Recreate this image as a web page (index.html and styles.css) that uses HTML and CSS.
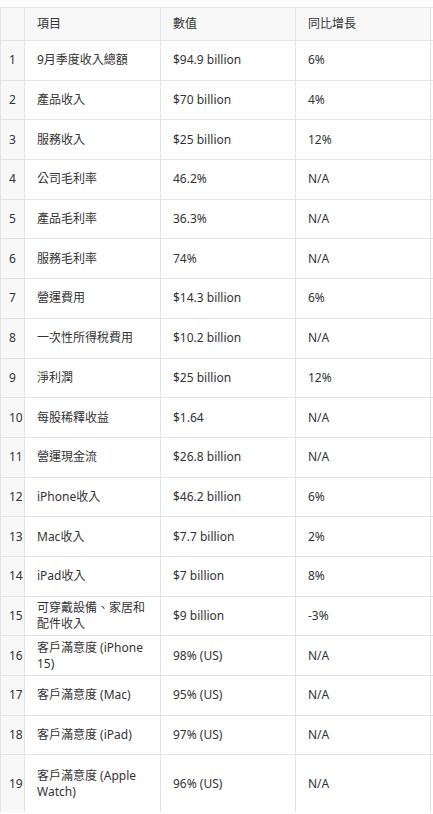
FILE: index.html
```html
<!DOCTYPE html>
<html lang="zh-Hant">
<head>
<meta charset="utf-8">
<title>表格</title>
<link rel="stylesheet" href="styles.css">
</head>
<body>
<div class="wrap">
<table class="data">
  <colgroup>
    <col class="c-idx"><col class="c-name"><col class="c-val"><col class="c-yoy"><col class="c-more">
  </colgroup>
  <thead>
    <tr><th class="idx"></th><th>項目</th><th>數值</th><th>同比增長</th><th class="more"></th></tr>
  </thead>
  <tbody>
    <tr><td class="idx">1</td><td>9月季度收入總額</td><td>$94.9 billion</td><td>6%</td><td class="more"></td></tr>
    <tr><td class="idx">2</td><td>產品收入</td><td>$70 billion</td><td>4%</td><td class="more"></td></tr>
    <tr><td class="idx">3</td><td>服務收入</td><td>$25 billion</td><td>12%</td><td class="more"></td></tr>
    <tr><td class="idx">4</td><td>公司毛利率</td><td>46.2%</td><td>N/A</td><td class="more"></td></tr>
    <tr><td class="idx">5</td><td>產品毛利率</td><td>36.3%</td><td>N/A</td><td class="more"></td></tr>
    <tr><td class="idx">6</td><td>服務毛利率</td><td>74%</td><td>N/A</td><td class="more"></td></tr>
    <tr><td class="idx">7</td><td>營運費用</td><td>$14.3 billion</td><td>6%</td><td class="more"></td></tr>
    <tr><td class="idx">8</td><td>一次性所得稅費用</td><td>$10.2 billion</td><td>N/A</td><td class="more"></td></tr>
    <tr><td class="idx">9</td><td>淨利潤</td><td>$25 billion</td><td>12%</td><td class="more"></td></tr>
    <tr><td class="idx">10</td><td>每股稀釋收益</td><td>$1.64</td><td>N/A</td><td class="more"></td></tr>
    <tr><td class="idx">11</td><td>營運現金流</td><td>$26.8 billion</td><td>N/A</td><td class="more"></td></tr>
    <tr><td class="idx">12</td><td>iPhone收入</td><td>$46.2 billion</td><td>6%</td><td class="more"></td></tr>
    <tr><td class="idx">13</td><td>Mac收入</td><td>$7.7 billion</td><td>2%</td><td class="more"></td></tr>
    <tr><td class="idx">14</td><td>iPad收入</td><td>$7 billion</td><td>8%</td><td class="more"></td></tr>
    <tr><td class="idx">15</td><td>可穿戴設備、家居和配件收入</td><td>$9 billion</td><td>-3%</td><td class="more"></td></tr>
    <tr><td class="idx">16</td><td>客戶滿意度 (iPhone 15)</td><td>98% (US)</td><td>N/A</td><td class="more"></td></tr>
    <tr><td class="idx">17</td><td>客戶滿意度 (Mac)</td><td>95% (US)</td><td>N/A</td><td class="more"></td></tr>
    <tr><td class="idx">18</td><td>客戶滿意度 (iPad)</td><td>97% (US)</td><td>N/A</td><td class="more"></td></tr>
    <tr class="last"><td class="idx">19</td><td>客戶滿意度 (Apple Watch)</td><td>96% (US)</td><td>N/A</td><td class="more"></td></tr>
  </tbody>
</table>
</div>
</body>
</html>
```

FILE: styles.css
```css
html, body {
  margin: 0;
  padding: 0;
  background: #ffffff;
}

.wrap {
  padding-top: 7px;
  width: 433px;
  overflow: hidden;
}

.data {
  border-collapse: collapse;
  table-layout: fixed;
  width: 460px;
  font-family: "Noto Sans", "Noto Sans CJK TC", sans-serif;
  font-size: 12px;
  line-height: 16px;
  color: #333333;
}

.c-idx { width: 24px; }
.c-name { width: 136px; }
.c-val { width: 135px; }
.c-yoy { width: 135px; }
.c-more { width: 30px; }

.data th,
.data td {
  border: 1px solid #e3e3e3;
  padding: 0 11px 0 12px;
  text-align: left;
  vertical-align: middle;
  font-weight: normal;
}

.data thead tr { height: 33px; }
.data thead th { background: #f8f8f8; }
.data thead th.more { background: #ffffff; }

.data tbody tr { height: 39.7px; }
.data tbody tr.last { height: 57px; }
.data tbody tr.last td { border-bottom: none; }

.data td.idx,
.data th.idx {
  background: #f8f8f8;
  padding: 0 0 0 8px;
}

.data td.more { background: #ffffff; }
```
